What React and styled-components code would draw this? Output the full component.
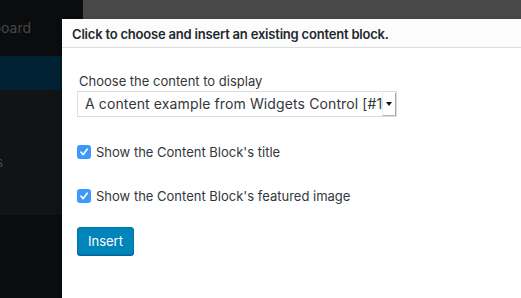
import React from "react";
import styled, { createGlobalStyle } from "styled-components";

const Global = createGlobalStyle`
  html, body { margin: 0; padding: 0; }
  body {
    background: #484848;
    overflow: hidden;
    font-family: Inter, "Liberation Sans", Arial, sans-serif;
    -webkit-font-smoothing: antialiased;
  }
`;

const Page = styled.div`
  position: relative;
  display: flex;
  width: 521px;
  height: 298px;
  overflow: hidden;
`;

const Sidebar = styled.nav`
  width: 83px;
  flex: none;
  display: flex;
  flex-direction: column;
  background: #0b0c0e;
  overflow: hidden;
`;

const SideItem = styled.div`
  height: ${(p) => p.$h}px;
  flex: none;
  display: flex;
  justify-content: flex-end;
  align-items: ${(p) => p.$align || "center"};
  padding-right: ${(p) => p.$pr || 0}px;
  padding-top: ${(p) => p.$pt || 0}px;
  box-sizing: border-box;
  background: ${(p) => p.$bg || "transparent"};
  color: #474747;
  font-size: ${(p) => p.$fs || 14}px;
  white-space: nowrap;
`;

const Main = styled.main`
  flex: 1;
  background: #484848;
`;

const Modal = styled.section`
  position: absolute;
  left: 62px;
  top: 19px;
  width: 480px;
  height: 300px;
  background: #fff;
  box-shadow: 0 3px 6px rgba(0, 0, 0, 0.3);
  display: flex;
  flex-direction: column;
`;

const Header = styled.header`
  height: 29px;
  box-sizing: border-box;
  padding: 1px 10px 0;
  background: #fcfcfc;
  border-bottom: 1px solid #dddddd;
  font-size: 13px;
  font-weight: 600;
  letter-spacing: -0.2px;
  line-height: 28px;
  color: #23282d;
`;

const Body = styled.div`
  padding: 24px 16px 0 16px;
  display: flex;
  flex-direction: column;
  align-items: flex-start;
  color: #32373c;
  font-size: 13px;
`;

const Label = styled.div`
  line-height: 18px;
  padding-left: 1px;
`;

const SelectBox = styled.div`
  margin-top: 1px;
  width: 320px;
  height: 26px;
  box-sizing: border-box;
  margin-left: -1px;
  display: flex;
  align-items: stretch;
  border: 1px solid #dcdcdc;
  background: #fff;
`;

const SelectText = styled.div`
  flex: 1;
  overflow: hidden;
  white-space: nowrap;
  padding-left: 7px;
  line-height: 24px;
  font-size: 14px;
  letter-spacing: 0.12px;
  color: #32373c;
`;

const Arrow = styled.div`
  width: 12px;
  flex: none;
  display: flex;
  align-items: center;
  justify-content: center;
  border-left: 1px solid #e6e6e6;
  border-right: 1px solid #a8a8a8;
  border-bottom: 1px solid #b8b8b8;
  margin: 1px 0 0 0;
  background: #fff;
`;

const CheckRow = styled.label`
  display: flex;
  align-items: center;
  gap: 5px;
  margin-top: ${(p) => p.$mt}px;
  line-height: 18px;
  margin-left: -1px;
`;

const Box = styled.span`
  width: 14px;
  height: 14px;
  border-radius: 3px;
  background: #3b99fc;
  display: flex;
  align-items: center;
  justify-content: center;
`;

const Button = styled.button`
  margin-top: 22px;
  margin-left: -1px;
  height: 28px;
  box-sizing: border-box;
  padding: 0 10px 1px;
  border: 1px solid #0073aa;
  border-radius: 3px;
  background: #0085ba;
  box-shadow: 0 1px 0 #006799;
  color: #fff;
  font-family: inherit;
  font-size: 13px;
  line-height: 26px;
`;

const Check = () => (
  <svg width="10" height="10" viewBox="0 0 10 10">
    <path d="M2 5.2 L4.2 7.6 L8.2 2.2" fill="none" stroke="#fff" strokeWidth="1.6" strokeLinecap="round" strokeLinejoin="round" />
  </svg>
);

export default function App() {
  return (
    <>
      <Global />
      <Page>
        <Sidebar>
          <SideItem $h={56} $pr={52} $align="flex-start" $pt={19}>Dashboard</SideItem>
          <SideItem $h={34} $bg="#002233" />
          <SideItem $h={125} $bg="#121315" $pr={80} $align="flex-start" $pt={64} $fs={13}>Widgets</SideItem>
        </Sidebar>
        <Main />
        <Modal>
          <Header>Click to choose and insert an existing content block.</Header>
          <Body>
            <Label>Choose the content to display</Label>
            <SelectBox>
              <SelectText>A content example from Widgets Control [#1]</SelectText>
              <Arrow>
                <svg width="6" height="4" viewBox="0 0 6 4"><path d="M0 0 H6 L3 4 Z" fill="#111" /></svg>
              </Arrow>
            </SelectBox>
            <CheckRow $mt={26}><Box><Check /></Box>Show the Content Block's title</CheckRow>
            <CheckRow $mt={26}><Box><Check /></Box>Show the Content Block's featured image</CheckRow>
            <Button>Insert</Button>
          </Body>
        </Modal>
      </Page>
    </>
  );
}
